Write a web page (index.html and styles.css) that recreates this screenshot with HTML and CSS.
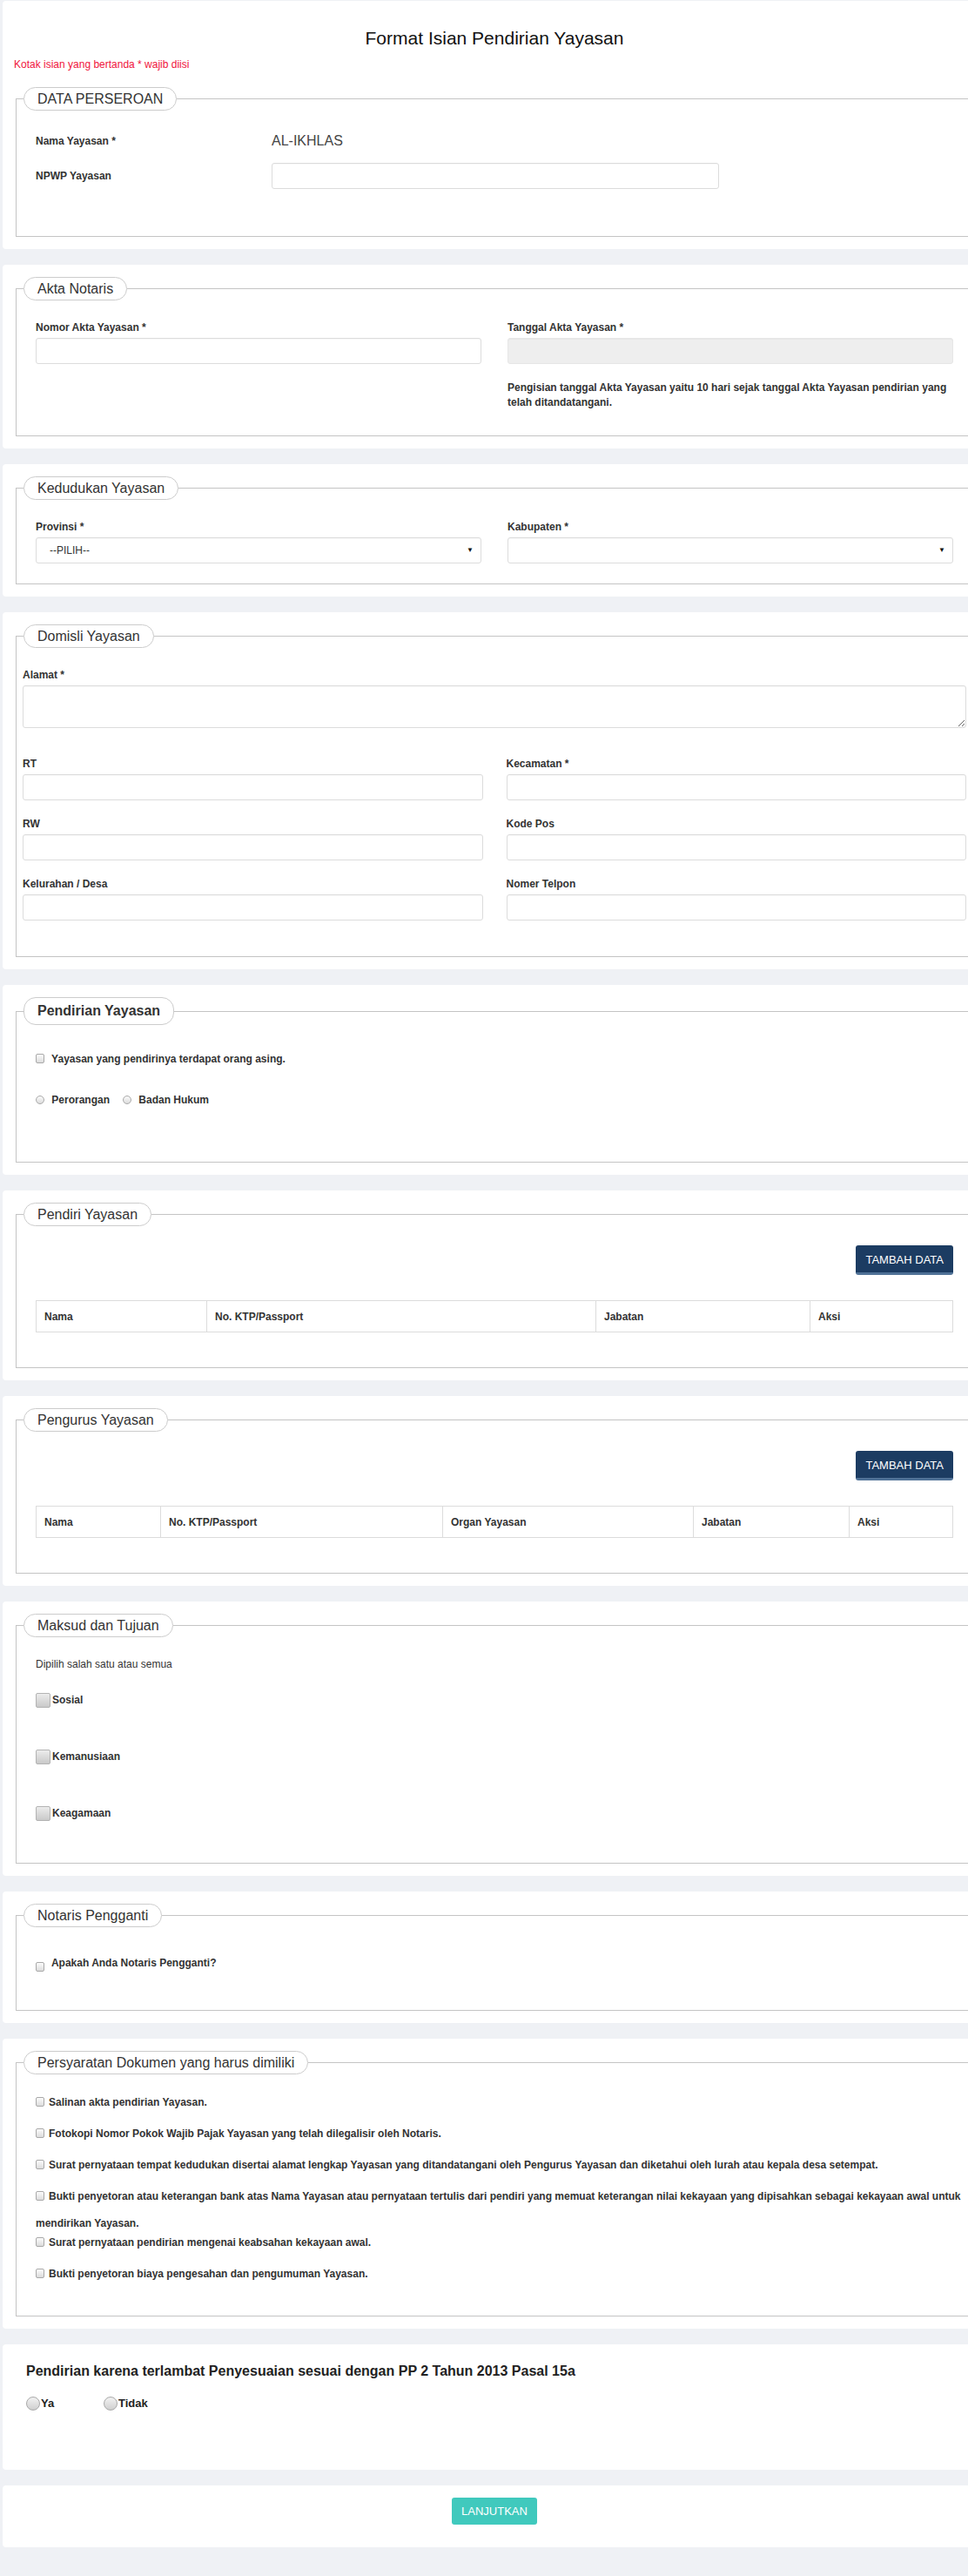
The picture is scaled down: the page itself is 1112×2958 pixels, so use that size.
FILE: index.html
```html
<!DOCTYPE html>
<html>
<head>
    <title>Format Isian Pendirian Yayasan</title>
    <link rel="stylesheet" href="styles.css">
</head>
<body>
<div class="page">

    <div class="card">
        <h3 class="page-title">Format Isian Pendirian Yayasan</h3>
        <p class="required-note">Kotak isian yang bertanda * wajib diisi</p>
        <fieldset class="box">
            <legend>DATA PERSEROAN</legend>
            <div class="box-body perseroan">
                <div class="dl-row row-static">
                    <label>Nama Yayasan *</label>
                    <span class="static-value">AL-IKHLAS</span>
                </div>
                <div class="dl-row">
                    <label>NPWP Yayasan</label>
                    <input type="text" class="form-input">
                </div>
            </div>
        </fieldset>
    </div>

    <div class="card">
        <fieldset class="box">
            <legend>Akta Notaris</legend>
            <div class="box-body">
                <div class="form-grid">
                    <div class="field">
                        <label>Nomor Akta Yayasan *</label>
                        <input type="text" class="form-input">
                    </div>
                    <div class="field">
                        <label>Tanggal Akta Yayasan *</label>
                        <input type="text" class="form-input" disabled>
                        <p class="help">Pengisian tanggal Akta Yayasan yaitu 10 hari sejak tanggal Akta Yayasan pendirian yang telah ditandatangani.</p>
                    </div>
                </div>
            </div>
        </fieldset>
    </div>

    <div class="card">
        <fieldset class="box">
            <legend>Kedudukan Yayasan</legend>
            <div class="box-body">
                <div class="form-grid">
                    <div class="field">
                        <label>Provinsi *</label>
                        <div class="select-wrap">
                            <select class="form-input">
                                <option>--PILIH--</option>
                            </select>
                        </div>
                    </div>
                    <div class="field">
                        <label>Kabupaten *</label>
                        <div class="select-wrap">
                            <select class="form-input">
                                <option></option>
                            </select>
                        </div>
                    </div>
                </div>
            </div>
        </fieldset>
    </div>

    <div class="card">
        <fieldset class="box">
            <legend>Domisli Yayasan</legend>
            <div class="box-body domisili">
                <div class="field alamat">
                    <label>Alamat *</label>
                    <textarea class="form-input"></textarea>
                </div>
                <div class="form-grid domisili-grid">
                    <div class="field">
                        <label>RT</label>
                        <input type="text" class="form-input">
                    </div>
                    <div class="field">
                        <label>Kecamatan *</label>
                        <input type="text" class="form-input">
                    </div>
                    <div class="field">
                        <label>RW</label>
                        <input type="text" class="form-input">
                    </div>
                    <div class="field">
                        <label>Kode Pos</label>
                        <input type="text" class="form-input">
                    </div>
                    <div class="field">
                        <label>Kelurahan / Desa</label>
                        <input type="text" class="form-input">
                    </div>
                    <div class="field">
                        <label>Nomer Telpon</label>
                        <input type="text" class="form-input">
                    </div>
                </div>
            </div>
        </fieldset>
    </div>

    <div class="card">
        <fieldset class="box">
            <legend class="legend-bold">Pendirian Yayasan</legend>
            <div class="box-body pendirian">
                <label class="check-line"><input type="checkbox" class="chk-sm"> Yayasan yang pendirinya terdapat orang asing.</label>
                <div class="radio-line">
                    <label><input type="radio" name="jenis" class="rad-sm"> Perorangan</label>
                    <label><input type="radio" name="jenis" class="rad-sm"> Badan Hukum</label>
                </div>
            </div>
        </fieldset>
    </div>

    <div class="card">
        <fieldset class="box">
            <legend>Pendiri Yayasan</legend>
            <div class="box-body tabel-box">
                <div class="btn-bar"><button class="btn-navy">TAMBAH DATA</button></div>
                <table class="data-table tbl-pendiri">
                    <thead>
                        <tr>
                            <th>Nama</th>
                            <th>No. KTP/Passport</th>
                            <th>Jabatan</th>
                            <th>Aksi</th>
                        </tr>
                    </thead>
                    <tbody></tbody>
                </table>
            </div>
        </fieldset>
    </div>

    <div class="card">
        <fieldset class="box">
            <legend>Pengurus Yayasan</legend>
            <div class="box-body tabel-box">
                <div class="btn-bar"><button class="btn-navy">TAMBAH DATA</button></div>
                <table class="data-table tbl-pengurus">
                    <thead>
                        <tr>
                            <th>Nama</th>
                            <th>No. KTP/Passport</th>
                            <th>Organ Yayasan</th>
                            <th>Jabatan</th>
                            <th>Aksi</th>
                        </tr>
                    </thead>
                    <tbody></tbody>
                </table>
            </div>
        </fieldset>
    </div>

    <div class="card">
        <fieldset class="box">
            <legend>Maksud dan Tujuan</legend>
            <div class="box-body maksud">
                <p class="hint">Dipilih salah satu atau semua</p>
                <label class="tujuan"><input type="checkbox" class="chk-lg">Sosial</label>
                <label class="tujuan"><input type="checkbox" class="chk-lg">Kemanusiaan</label>
                <label class="tujuan"><input type="checkbox" class="chk-lg">Keagamaan</label>
            </div>
        </fieldset>
    </div>

    <div class="card">
        <fieldset class="box">
            <legend>Notaris Pengganti</legend>
            <div class="box-body notaris">
                <label class="check-line notaris-line"><input type="checkbox" class="chk-sm"> Apakah Anda Notaris Pengganti?</label>
            </div>
        </fieldset>
    </div>

    <div class="card">
        <fieldset class="box">
            <legend>Persyaratan Dokumen yang harus dimiliki</legend>
            <div class="box-body dokumen">
                <div class="doc-item"><input type="checkbox" class="chk-sm">Salinan akta pendirian Yayasan.</div>
                <div class="doc-item"><input type="checkbox" class="chk-sm">Fotokopi Nomor Pokok Wajib Pajak Yayasan yang telah dilegalisir oleh Notaris.</div>
                <div class="doc-item"><input type="checkbox" class="chk-sm">Surat pernyataan tempat kedudukan disertai alamat lengkap Yayasan yang ditandatangani oleh Pengurus Yayasan dan diketahui oleh lurah atau kepala desa setempat.</div>
                <div class="doc-item doc-wrap"><input type="checkbox" class="chk-sm">Bukti penyetoran atau keterangan bank atas Nama Yayasan atau pernyataan tertulis dari pendiri yang memuat keterangan nilai kekayaan yang dipisahkan sebagai kekayaan awal untuk mendirikan Yayasan.</div>
                <div class="doc-item"><input type="checkbox" class="chk-sm">Surat pernyataan pendirian mengenai keabsahan kekayaan awal.</div>
                <div class="doc-item"><input type="checkbox" class="chk-sm">Bukti penyetoran biaya pengesahan dan pengumuman Yayasan.</div>
            </div>
        </fieldset>
    </div>

    <div class="card card-pp">
        <h4 class="pp-title">Pendirian karena terlambat Penyesuaian sesuai dengan PP 2 Tahun 2013 Pasal 15a</h4>
        <div class="pp-options">
            <label class="pp-option"><input type="radio" name="terlambat" class="rad-lg">Ya</label>
            <label class="pp-option"><input type="radio" name="terlambat" class="rad-lg">Tidak</label>
        </div>
    </div>

    <div class="card card-submit">
        <button class="btn-teal">LANJUTKAN</button>
    </div>

</div>
</body>
</html>
```

FILE: styles.css
```css
html, body {
    overflow-x: hidden;
}

body {
    margin: 0;
    background-color: #eff1f5;
    font-family: "Liberation Sans", Arial, sans-serif;
    font-size: 12px;
    color: #333;
}

.page {
    width: 1130px;
    padding: 1px 0 20px 3px;
}

.card {
    background-color: #fff;
    border-radius: 4px;
    padding: 14px 15px 14px;
    margin-bottom: 18px;
}

.page-title {
    margin: 17px 0 0;
    font-size: 21px;
    line-height: 24px;
    font-weight: normal;
    color: #111;
    text-align: center;
}

.required-note {
    margin: 10px 0 0 -2px;
    line-height: 17px;
    color: #f0143c;
}

/* fieldset with pill legend */
.box {
    margin: 0;
    padding: 0;
    border: 1px solid #c4c4c4;
    min-width: 0;
}

.card .required-note + .box {
    margin-top: 17px;
}

.box legend {
    margin-left: 8px;
    padding: 3px 15px;
    border: 1px solid #ccc;
    border-radius: 14px;
    background: #fff;
    font-size: 16px;
    line-height: 19px;
    color: #333;
}

.box legend.legend-bold {
    padding: 5px 15px;
    line-height: 20px;
    font-weight: bold;
}

.box-body {
    padding: 23px 22px 23px;
}

label {
    display: block;
    font-weight: bold;
    line-height: 17px;
    color: #333;
}

.form-input {
    display: block;
    box-sizing: border-box;
    width: 100%;
    height: 30px;
    margin: 0;
    padding: 0 12px;
    border: 1px solid #dcdcdc;
    border-radius: 3px;
    background-color: #fff;
    font-family: inherit;
    font-size: 12px;
    color: #333;
    box-shadow: inset 0 1px 1px rgba(0, 0, 0, 0.03);
}

.form-input:disabled {
    background-color: #eee;
    border-color: #e6e6e6;
}

textarea.form-input {
    height: 49px;
    padding: 6px 12px;
}

.field label {
    margin-bottom: 3px;
}

.form-grid {
    display: grid;
    grid-template-columns: 1fr 1fr;
    column-gap: 30px;
}

.help {
    margin: 19px 0 6px;
    font-weight: bold;
    line-height: 17px;
    color: #333;
}

/* data perseroan */
.perseroan {
    padding: 25px 22px 54px;
}

.dl-row {
    display: grid;
    grid-template-columns: 271px 514px;
    align-items: center;
    height: 30px;
}

.dl-row.row-static {
    height: 20px;
    margin-bottom: 15px;
}

.static-value {
    font-size: 16px;
    color: #444;
}

/* select */
.select-wrap {
    position: relative;
}

.select-wrap select {
    appearance: none;
    -webkit-appearance: none;
    padding: 0 15px;
}

.select-wrap::after {
    content: "\25BC";
    position: absolute;
    right: 9px;
    top: 10px;
    font-size: 8px;
    color: #111;
    pointer-events: none;
}

/* domisili */
.domisili {
    padding: 23px 7px 41px;
}

.alamat {
    margin-bottom: 33px;
}

.domisili-grid {
    column-gap: 27px;
    row-gap: 19px;
}

/* checkbox and radio */
.chk-sm,
.rad-sm {
    appearance: none;
    -webkit-appearance: none;
    width: 10px;
    height: 11px;
    margin: 0 5px 0 0;
    border: 1px solid #a9a9a9;
    border-radius: 2px;
    background: linear-gradient(#fbfbfb, #dcdcdc);
    vertical-align: -1px;
}

.rad-sm {
    height: 10px;
    border-radius: 50%;
}

.chk-lg {
    appearance: none;
    -webkit-appearance: none;
    width: 17px;
    height: 17px;
    margin: 0 2px 0 0;
    border: 1px solid #b3b3b3;
    border-radius: 2px;
    background: linear-gradient(#ececec, #c9c9c9);
}

.rad-lg {
    appearance: none;
    -webkit-appearance: none;
    width: 16px;
    height: 16px;
    margin: 0 1px 0 0;
    border: 1px solid #a9a9a9;
    border-radius: 50%;
    background: linear-gradient(#f2f2f2, #cfcfcf);
}

/* pendirian */
.pendirian {
    padding: 31px 22px 62px;
}

.check-line .chk-sm {
    margin-right: 5px;
}

.radio-line {
    display: flex;
    gap: 15px;
    margin-top: 30px;
}

.radio-line label {
    display: inline-block;
}

/* tables */
.tabel-box {
    padding: 22px 22px 40px;
}

.btn-bar {
    text-align: right;
}

.btn-navy {
    padding: 9px 11px 7px;
    border: none;
    border-bottom: 3px solid #4f7196;
    border-radius: 3px;
    background-color: #1c3c62;
    font-family: inherit;
    font-size: 13px;
    line-height: 15px;
    color: #fff;
    cursor: pointer;
}

.data-table {
    width: 100%;
    margin-top: 29px;
    border-collapse: collapse;
    table-layout: fixed;
}

.data-table th {
    height: 36px;
    box-sizing: border-box;
    padding: 0 9px;
    border: 1px solid #dcdcdc;
    text-align: left;
    font-weight: bold;
    color: #333;
}

.tbl-pendiri th:nth-child(1) { width: 196px; }
.tbl-pendiri th:nth-child(2) { width: 447px; }
.tbl-pendiri th:nth-child(3) { width: 246px; }

.tbl-pengurus th:nth-child(1) { width: 143px; }
.tbl-pengurus th:nth-child(2) { width: 324px; }
.tbl-pengurus th:nth-child(3) { width: 288px; }
.tbl-pengurus th:nth-child(4) { width: 179px; }

/* maksud dan tujuan */
.maksud {
    padding: 23px 22px 48px;
}

.hint {
    margin: 0;
    line-height: 17px;
    color: #333;
}

.tujuan {
    display: flex;
    align-items: center;
    height: 17px;
    margin-top: 48px;
}

.hint + .tujuan {
    margin-top: 24px;
}

/* notaris pengganti */
.notaris {
    padding: 33px 22px 44px;
}

.notaris-line .chk-sm {
    vertical-align: -6px;
}

/* dokumen */
.dokumen {
    padding: 17px 22px 27px;
    margin-right: -14px;
}

.doc-item {
    font-weight: bold;
    line-height: 31px;
    margin-bottom: 5px;
}

.doc-item.doc-wrap {
    margin-bottom: -9px;
}

/* pp 2 tahun 2013 */
.card-pp {
    padding: 21px 27px 68px;
}

.pp-title {
    margin: 0;
    font-size: 16px;
    line-height: 20px;
    color: #222;
}

.pp-options {
    display: flex;
    margin-top: 18px;
}

.pp-option {
    display: inline-flex;
    align-items: center;
    width: 89px;
    height: 17px;
    font-size: 13px;
    color: #222;
}

/* submit */
.card-submit {
    padding: 14px 15px 26px;
    text-align: center;
}

.btn-teal {
    padding: 8px 11px;
    border: none;
    border-radius: 3px;
    background-color: #40c9bd;
    font-family: inherit;
    font-size: 13px;
    line-height: 15px;
    color: #fff;
    cursor: pointer;
}
```
